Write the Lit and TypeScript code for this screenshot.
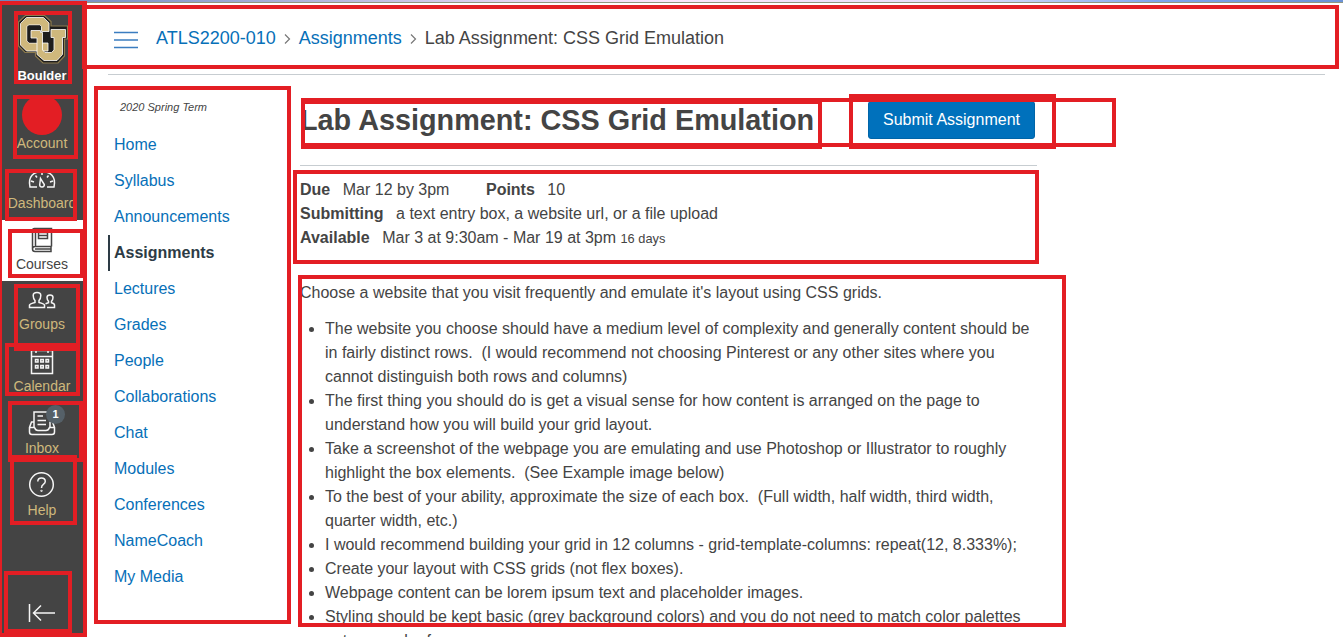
import { LitElement, html, svg, css } from "lit";
import { customElement } from "lit/decorators.js";
import { classMap } from "lit/directives/class-map.js";

const icons: Record<string, unknown> = {
  Dashboard: svg`<path d="M11 24H4C1.500 13.500 8 8.500 16 8.500S30.500 13.500 28 24H21M5 18l3 1M9.500 12.500l1.500 2M16 9v3M22.500 12.500l-1.500 2M27 18l-3 1"/><path d="M14.500 15.500l-.8 6.500a2.300 2.300 0 1 0 4.600-.5z"/>`,
  Courses: svg`<path d="M25.500 22.500V4.500H8.500Q6.500 4.500 6.500 7V25Q6.500 27.500 9 27.500H25V22.500H9Q6.500 22.500 6.500 25M9.500 5V22M9 25H25"/><path d="M12.500 8.500h9v6h-9zM12.500 11.500h9"/>`,
  Groups: svg`<path d="M3.500 22.500V20Q4 18.800 9 17.500V15.500Q7.200 13.500 7.200 10.500Q7.200 7.500 11 7.500T14.800 10.500Q14.800 13.500 13 15.500V17.500Q18 18.800 18.500 20V22.500z"/><path d="M21 22.500H28.500V20Q28.500 18.500 25.500 17.700V16.200Q27 14.700 27 12.500Q27 10 24 10T21 12.500Q21 14.700 22.500 16.200V17.700L19.500 18.700"/>`,
  Calendar: svg`<path d="M5.500 4.500H26.500V27.500H5.500zM5.500 10.500H26.500M10 2v5M22 2v5"/><path d="M9.500 13.500h2.500v2.500H9.500zM14.800 13.500h2.500v2.500h-2.500zM20 13.500h2.500v2.500H20zM9.500 19.500h2.500v2.500H9.500zM14.800 19.500h2.500v2.500h-2.500zM20 19.500h2.500v2.500H20z"/>`,
  Inbox: svg`<path d="M8 20V5H24V20M11.500 9H17M11.500 13.500H20M11.500 17.500H20"/><path d="M8 15H5.500L3.500 20.500V25Q3.500 27.500 6 27.500H26Q28.500 27.500 28.500 25V20.500L26.500 15H24M3.500 20.500H8.500Q9.500 23.500 12 23.500H20Q22.500 23.500 23.500 20.500H28.500"/>`,
  Help: svg`<circle cx="15.500" cy="15.500" r="11.800"/><path d="M11.800 12.500Q11.800 9 15.500 9T19.300 12.300Q19.300 14 17.400 15.300T15.500 19"/><circle cx="15.500" cy="21.800" r=".4"/>`,
};

const menu = ["Dashboard", "Courses", "Groups", "Calendar", "Inbox", "Help"];

const courseLinks = [
  "Home", "Syllabus", "Announcements", "Assignments", "Lectures", "Grades", "People",
  "Collaborations", "Chat", "Modules", "Conferences", "NameCoach", "My Media",
];

const steps = [
  ["The website you choose should have a medium level of complexity and generally content should be", "in fairly distinct rows.\u00a0 (I would recommend not choosing Pinterest or any other sites where you", "cannot distinguish both rows and columns)"],
  ["The first thing you should do is get a visual sense for how content is arranged on the page to", "understand how you will build your grid layout."],
  ["Take a screenshot of the webpage you are emulating and use Photoshop or Illustrator to roughly", "highlight the box elements.\u00a0 (See Example image below)"],
  ["To the best of your ability, approximate the size of each box.\u00a0 (Full width, half width, third width,", "quarter width, etc.)"],
  ["I would recommend building your grid in 12 columns - grid-template-columns: repeat(12, 8.333%);"],
  ["Create your layout with CSS grids (not flex boxes)."],
  ["Webpage content can be lorem ipsum text and placeholder images."],
  ["Styling should be kept basic (grey background colors) and you do not need to match color palettes", "not your color for"],
];

// Annotation frames drawn over the page: outer left, top, right, bottom.
const frames = [
  [-2, 1, 87, 637], [82, 5, 1339, 69], [14, 11, 72, 84], [13, 95, 78, 159],
  [5, 169, 77, 221], [8, 229, 84, 278], [14, 284, 80, 351], [5, 343, 80, 396],
  [8, 401, 83, 462], [10, 455, 77, 525], [4, 571, 72, 633], [94, 86, 291, 624],
  [301, 98, 1116, 147], [301, 100, 822, 149], [849, 94, 1056, 149],
  [293, 170, 1039, 264], [298, 275, 1066, 627],
];

@customElement("global-nav")
class GlobalNav extends LitElement {
  static styles = css`
    :host { display: flex; flex-direction: column; align-items: stretch; width: 83px; background: #444; color: #cfb87c; font-size: 14px; line-height: 16px; text-align: center; }
    .logo { height: 92px; padding-top: 11px; box-sizing: border-box; }
    .cu { display: block; margin: 0 0 0 17px; }
    .campus { color: #fff; font-weight: bold; font-size: 13px; line-height: 15px; margin-top: 4px; padding-left: 1px; }
    .account { height: 64px; box-sizing: border-box; padding-left: 1px; }
    .avatar { width: 40px; height: 40px; border-radius: 50%; background: #e31e24; margin: 0 auto; }
    .item { height: 61px; box-sizing: border-box; padding: 4px 0 0 1px; position: relative; white-space: nowrap; }
    .item.tall { height: 62px; }
    .item.active { background: #fff; color: #444; }
    .icon { display: block; margin: 0 auto; margin-left: 25px; fill: none; stroke: #f5f5f5; stroke-width: 1.5; }
    .active .icon { stroke: #444; }
    .label { display: block; text-align: center; }
    .groups .label { margin-top: -1px; }
    .tall .label, .help .label { margin-top: 1px; }
    .badge { position: absolute; left: 46px; top: 2px; width: 19px; height: 19px; border-radius: 50%; background: #556068; color: #fff; font: bold 11px/19px "Liberation Sans", Arial, sans-serif; }
    .collapse { margin: auto 0 10px 26px; display: block; fill: none; stroke: #f5f5f5; stroke-width: 1.5; }
  `;
  render() {
    return html`
      <div class="logo">
        <svg class="cu" width="52" height="50" viewBox="0 0 52 50">
          <path fill="#1d1d1d" stroke="#8d7b4e" stroke-width="1.200" d="M8.500 1.500H27.500L34 7.500V12H50.500V25H47.500V42L41 49H26L18.500 42V38.500H8L1.500 32V8z"/>
          <path fill="#cfb87c" stroke="#fff" stroke-width=".8" d="M9.500 3.500H26.500L32 9V17.500H24.500V12.500L23 11H11.500L10 12.500V27L12 29H31V37H9.500L3.500 31V9.500z"/>
          <path fill="#1d1d1d" d="M10.500 13L12 11.500H23L24 13V18H33V24H26V28.500H12L10.500 27z"/>
          <path fill="#cfb87c" stroke="#fff" stroke-width=".8" d="M14 16.500H23.500V18.500H25.500V36L28 38.500H34.500L37 36V23.500H34V15.500H48.500V23.500H45.500V40.500L40 46.500H27L20 40.500V24H14z"/>
        </svg>
        <div class="campus">Boulder</div>
      </div>
      <div class="account"><div class="avatar"></div><span class="label">Account</span></div>
      ${menu.map((name) => html`
        <div class=${classMap({ item: true, active: name === "Courses", groups: name === "Groups", tall: name === "Inbox", help: name === "Help" })}>
          <svg class="icon" width="32" height="32" viewBox="0 0 32 32">${icons[name]}</svg>
          <span class="label">${name}</span>
          ${name === "Inbox" ? html`<span class="badge">1</span>` : ""}
        </div>`)}
      <svg class="collapse" width="32" height="28" viewBox="0 0 32 28"><path d="M3.500 5V23M8 14H29M15 6.500L7.500 14L15 21.500"/></svg>
    `;
  }
}

@customElement("app-root")
class AppRoot extends LitElement {
  static styles = css`
    :host { display: block; position: relative; width: 1343px; height: 637px; overflow: hidden; background: #fff; color: #444; font: 16px/24px "Liberation Sans", Arial, sans-serif; }
    .strip { height: 2px; border-bottom: 1px solid #8f9781; background: linear-gradient(90deg, #6f88bc 0%, #8498ca 10%, #e5d5f2 38%, #fde5fa 50%, #e9dffa 70%, #c5d2f8 76%, #7ea4ee 86%, #6b93d6 100%); }
    .shell { display: flex; height: 634px; }
    .page { flex: 1; padding: 0 18px 0 25px; }
    .crumbs { height: 71px; border-bottom: 1px solid #c7cdd1; display: flex; align-items: center; font-size: 18px; white-space: nowrap; }
    .burger { display: block; margin: 2px 18px 0 6px; stroke: #3b7dc0; stroke-width: 1.7; }
    .sep { margin: 1px 8px 0 8px; fill: none; stroke: #777; stroke-width: 1.200; }
    .link { color: #0770b8; }
    .crumb { padding-bottom: 2px; }
    .columns { display: flex; }
    .course { width: 192px; }
    .term { font-size: 11px; font-style: italic; line-height: 16px; padding: 24px 0 12px 12px; }
    .entry { line-height: 36px; height: 36px; padding-left: 6px; color: #0770b8; }
    .entry.current { color: #2d3b45; font-weight: bold; border-left: 2px solid #2d3b45; padding-left: 4px; }
    .content { width: 737px; white-space: nowrap; }
    .heading { display: flex; justify-content: space-between; height: 90px; border-bottom: 1px solid #c7cdd1; }
    .title { margin: 27px 0 0; font-size: 28.8px; line-height: 36px; font-weight: bold; }
    .submit { margin: 26px 2px 0 0; width: 167px; height: 38px; box-sizing: border-box; border: 1px solid #0065a8; border-radius: 3px; background: #0071bc; color: #fff; font: 16px/34px "Liberation Sans", Arial, sans-serif; padding: 0; }
    .details { padding-top: 12px; }
    .row { display: flex; height: 24px; }
    .key { font-weight: bold; margin-right: 12.5px; }
    .value { margin-right: 36.5px; }
    .small { font-size: 12.8px; padding-top: 1px; }
    .intro { margin: 31px 0 12px; }
    .steps { margin: 0; padding-left: 25px; }
    .line { display: block; }
    .frames { position: absolute; left: 0; top: 0; pointer-events: none; fill: none; stroke: #e31e24; stroke-width: 4; }
  `;
  render() {
    const sep = html`<svg class="sep" width="7" height="12" viewBox="0 0 7 12"><path d="M1 1.500L5.500 6L1 10.500"/></svg>`;
    return html`
      <div class="strip"></div>
      <div class="shell">
        <global-nav></global-nav>
        <div class="page">
          <div class="crumbs">
            <svg class="burger" width="24" height="18" viewBox="0 0 24 18"><path d="M0 1.500H24M0 9H24M0 16.500H24"/></svg>
            <span class="crumb link">ATLS2200-010</span>${sep}<span class="crumb link">Assignments</span>${sep}<span class="crumb">Lab Assignment: CSS Grid Emulation</span>
          </div>
          <div class="columns">
            <div class="course">
              <div class="term">2020 Spring Term</div>
              ${courseLinks.map((l) => html`<div class=${classMap({ entry: true, current: l === "Assignments" })}>${l}</div>`)}
            </div>
            <div class="content">
              <div class="heading">
                <h1 class="title">Lab Assignment: CSS Grid Emulation</h1>
                <button class="submit">Submit Assignment</button>
              </div>
              <div class="details">
                <div class="row"><span class="key">Due</span><span class="value">Mar 12 by 3pm</span><span class="key">Points</span><span>10</span></div>
                <div class="row"><span class="key">Submitting</span><span>a text entry box, a website url, or a file upload</span></div>
                <div class="row"><span class="key">Available</span><span>Mar 3 at 9:30am - Mar 19 at 3pm&nbsp;</span><span class="small">16 days</span></div>
              </div>
              <p class="intro">Choose a website that you visit frequently and emulate it's layout using CSS grids.</p>
              <ul class="steps">${steps.map((s) => html`<li>${s.map((t) => html`<span class="line">${t}</span>`)}</li>`)}</ul>
            </div>
          </div>
        </div>
      </div>
      <svg class="frames" width="1343" height="637" viewBox="0 0 1343 637">
        ${frames.map(([l, t, r, b]) => svg`<rect x=${l + 2} y=${t + 2} width=${r - l - 4} height=${b - t - 4}></rect>`)}
      </svg>
    `;
  }
}
